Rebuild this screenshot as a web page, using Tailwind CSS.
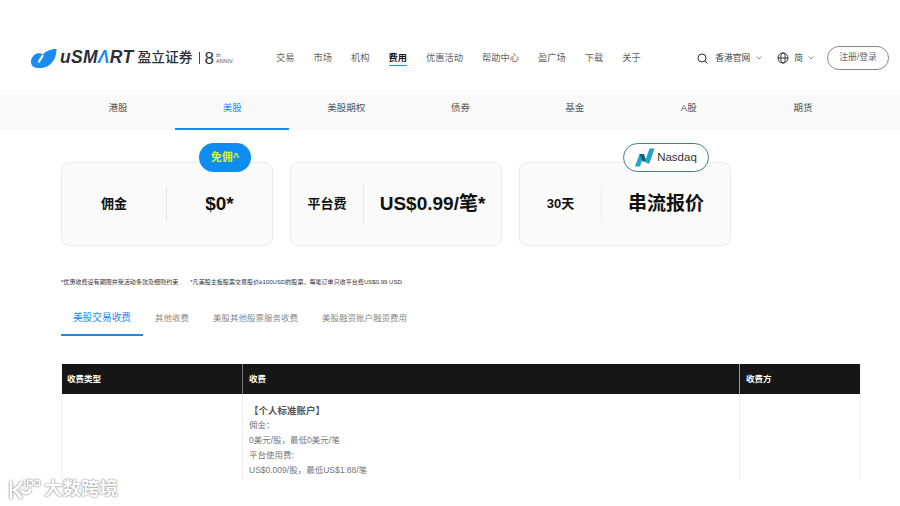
<!DOCTYPE html>
<html lang="zh-CN">
<head>
  <meta charset="UTF-8">
  <title>uSMART 费用</title>
  <script src="https://cdn.jsdelivr.net/npm/@tailwindcss/browser@4"></script>
</head>
<body class="relative w-[900px] h-[506px] overflow-hidden bg-white font-['Liberation_Sans','Noto_Sans_CJK_SC',sans-serif]">

  <!-- top header -->
  <header class="h-[95px] flex items-center pl-[30px] pr-[11px] pt-[21px]">
    <div class="flex items-center w-[246px] shrink-0">
      <svg width="27" height="20" viewBox="0 0 27 20" class="mr-[3px]">
        <path d="M26.500 1 C26.500 8 24 14 18 18 C13 21 5 21 2 17.500 C0 14 1 9 5 6.500 C8 4.500 11 5 13 6.500 C15 3.500 20 1 26.500 1Z" fill="#1a8cf0"/>
        <path d="M12.500 8 L9 13.500" stroke="#fff" stroke-width="2.200" stroke-linecap="round" fill="none"/>
      </svg>
      <span class="text-[17.5px] leading-none font-bold italic text-[#2b2f36] tracking-[0.3px]">uSM<span class="text-[#1a8cf0]">Λ</span>RT</span>
      <span class="ml-[4px] text-[13.75px] leading-none font-medium text-[#2b2f36]">盈立证券</span>
      <span class="ml-[7px] w-px h-[12px] bg-[#444]"></span>
      <span class="ml-[4px] text-[17px] leading-none text-[#333]">8</span>
      <span class="ml-[2px] flex flex-col text-[5.5px] leading-[6px] text-[#555]"><span>th</span><span>ANNIV.</span></span>
    </div>
    <nav class="flex items-center gap-[19px] mt-[1px] text-[9.25px] text-[#666]">
      <a>交易</a>
      <a>市场</a>
      <a>机构</a>
      <a class="font-bold text-[#111] border-b border-[#1a8cf0] leading-[13px]">费用</a>
      <a>优惠活动</a>
      <a>帮助中心</a>
      <a>盈广场</a>
      <a>下载</a>
      <a>关于</a>
    </nav>
    <div class="ml-auto flex items-center text-[8.75px] text-[#444]">
      <svg width="11" height="11" viewBox="0 0 11 11" fill="none" stroke="#333" stroke-width="1">
        <circle cx="5" cy="5" r="4"/><path d="M8 8l2.5 2.5"/>
      </svg>
      <span class="ml-[7px] mt-[1px]">香港官网</span>
      <svg width="6" height="4" viewBox="0 0 6 4" fill="none" stroke="#777" stroke-width="0.8" class="ml-[6px]"><path d="M0.5 0.5L3 3l2.5-2.5"/></svg>
      <svg width="12" height="12" viewBox="0 0 12 12" fill="none" stroke="#333" stroke-width="1" class="ml-[15px]">
        <circle cx="6" cy="6" r="5"/><ellipse cx="6" cy="6" rx="2.2" ry="5"/><path d="M1 6h10"/>
      </svg>
      <span class="ml-[5px] mt-[1px]">简</span>
      <svg width="6" height="4" viewBox="0 0 6 4" fill="none" stroke="#777" stroke-width="0.8" class="ml-[5px]"><path d="M0.5 0.5L3 3l2.5-2.5"/></svg>
      <button class="ml-[13px] w-[62px] h-[24px] rounded-full border border-[#888] text-[#666] text-[8.75px]">注册/登录</button>
    </div>
  </header>

  <!-- market tabs -->
  <div class="h-[35px] bg-[#f9f9f9] pl-[61px] pr-[40px] grid grid-cols-7 text-[9.5px] text-[#555]">
    <a class="flex items-center justify-center pb-[8px]">港股</a>
    <a class="flex items-center justify-center pb-[6px] text-[#1a8cf0] border-b-2 border-[#1a8cf0]">美股</a>
    <a class="flex items-center justify-center pb-[8px]">美股期权</a>
    <a class="flex items-center justify-center pb-[8px]">债券</a>
    <a class="flex items-center justify-center pb-[8px]">基金</a>
    <a class="flex items-center justify-center pb-[8px]">A股</a>
    <a class="flex items-center justify-center pb-[8px]">期货</a>
  </div>

  <main class="pl-[61px] w-[861px]">
    <!-- price cards -->
    <div class="flex gap-[17px] mt-[32px]">
      <div class="relative w-[212px] h-[84px] rounded-[8px] border border-[#eaeaea] bg-[#fafafa] flex items-center">
        <span class="absolute left-[137px] -top-[20px] w-[52px] h-[29px] rounded-full bg-[#0d8df0] flex items-center justify-center text-[11px] font-bold text-[#d8f534]">免佣^</span>
        <span class="w-[104px] text-center text-[13px] font-bold text-[#111]">佣金</span>
        <span class="w-px h-[36px] bg-[#e6e6e6]"></span>
        <span class="flex-1 text-center text-[19px] font-bold text-[#111]">$0*</span>
      </div>
      <div class="w-[212px] h-[84px] rounded-[8px] border border-[#eaeaea] bg-[#fafafa] flex items-center">
        <span class="w-[72px] text-center text-[13px] font-bold text-[#111]">平台费</span>
        <span class="w-px h-[38px] bg-[#e6e6e6]"></span>
        <span class="flex-1 text-center text-[19px] font-bold text-[#111] whitespace-nowrap">US$0.99/笔*</span>
      </div>
      <div class="relative w-[212px] h-[84px] rounded-[8px] border border-[#eaeaea] bg-[#fafafa] flex items-center">
        <span class="absolute left-[103px] -top-[20px] w-[86px] h-[29px] rounded-full border border-[#3f7d96] bg-white flex items-center justify-center gap-[2px] text-[11.5px] font-medium text-[#333]">
          <svg width="20" height="19" viewBox="0 0 20 19">
            <path d="M0 18.5 L4.5 6 L9 6 L5 18.5Z" fill="#1fa6c9"/>
            <path d="M4.5 6 L9 6 L11.5 13.5 L7.5 13.5Z" fill="#0f5f85"/>
            <path d="M10 13.5 L14.5 0.5 L19.5 0.5 L14.5 15 C13.5 16.5 11.5 15.5 10 13.5Z" fill="#1fa6c9"/>
          </svg>
          Nasdaq
        </span>
        <span class="w-[81px] text-center text-[13px] font-bold text-[#111]">30天</span>
        <span class="w-px h-[38px] bg-[#efefef]"></span>
        <span class="flex-1 text-center text-[19px] font-bold text-[#111]">串流报价</span>
      </div>
    </div>

    <!-- footnotes -->
    <div class="flex gap-[12px] mt-[31px] text-[6.05px] leading-[10px] text-[#333] whitespace-nowrap">
      <span>*优惠收费设有期限并受活动条款及细则约束</span>
      <span>*凡美股主板股票交易股价≥100USD的股票，每笔订单只收平台费US$0.99 USD</span>
    </div>

    <!-- fee tabs -->
    <div class="flex mt-[20px] h-[29px] text-[8.5px] text-[#888] whitespace-nowrap">
      <a class="w-[82px] text-center text-[9.7px] text-[#1a8cf0] border-b-2 border-[#1a8cf0] pt-[4px]">美股交易收费</a>
      <a class="ml-[12px] pt-[5px]">其他收费</a>
      <a class="ml-[24px] pt-[5px]">美股其他股票服务收费</a>
      <a class="ml-[24px] pt-[5px]">美股融资账户融资费用</a>
    </div>

    <!-- fee table -->
    <div class="mt-[28px] w-[800px] h-[116px] overflow-hidden border-x border-[#f2f2f2] text-[8.5px]">
      <div class="flex h-[30px] bg-[#161616] text-white font-bold">
        <div class="w-[181px] pl-[5px] flex items-center border-r border-[#777]">收费类型</div>
        <div class="w-[497px] pl-[6px] flex items-center border-r border-[#999]">收费</div>
        <div class="flex-1 pl-[6px] flex items-center">收费方</div>
      </div>
      <div class="flex h-[86px]">
        <div class="w-[181px] border-r border-[#f0f0f0]"></div>
        <div class="w-[497px] pl-[6px] pt-[9px] border-r border-[#f0f0f0] text-[#777] leading-[15px]">
          <div class="text-[9.5px] font-bold text-[#555]">【个人标准账户】</div>
          <div>佣金：</div>
          <div>0美元/股，最低0美元/笔</div>
          <div>平台使用费:</div>
          <div>US$0.009/股，最低US$1.88/笔</div>
        </div>
        <div class="flex-1"></div>
      </div>
    </div>
  </main>

  <!-- watermark over the page -->
  <div class="absolute left-[8px] bottom-[6px] flex items-center gap-[3px] text-white [text-shadow:0_0_2px_#888,0_0_1px_#888]">
    <svg width="33" height="22" viewBox="0 0 33 22" fill="none" stroke="#fff" stroke-width="2.6" stroke-linecap="round" class="drop-shadow-[0_0_1px_#666]">
      <path d="M3 4v16M13 5C11 9 8 11 6 12C9 14 11 17 13 20"/>
      <path d="M14 13a4.500 4.500 0 0 0 8 -1"/>
      <path d="M17 2v7" stroke-width="1.4"/>
      <circle cx="22" cy="5" r="2.800" stroke-width="1.400"/>
      <circle cx="29" cy="5" r="2.800" stroke-width="1.400"/>
    </svg>
    <span class="text-[18.5px] font-bold leading-none">大数跨境</span>
  </div>
</body>
</html>
